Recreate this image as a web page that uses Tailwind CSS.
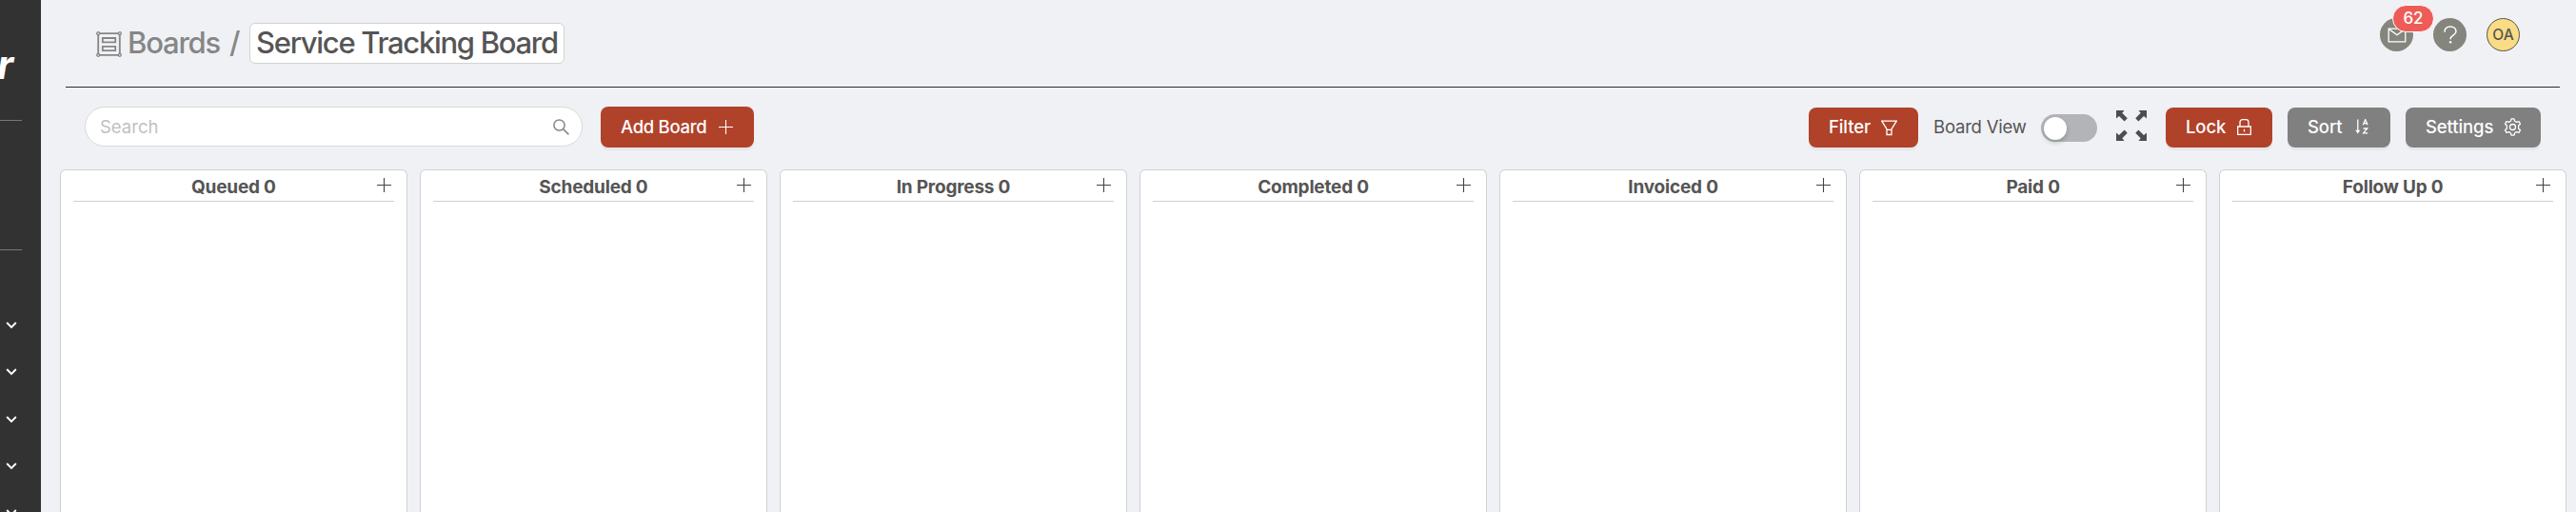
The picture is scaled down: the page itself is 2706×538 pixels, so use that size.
<!DOCTYPE html>
<html lang="en">
<head>
  <meta charset="UTF-8" />
  <meta name="viewport" content="width=device-width, initial-scale=1.0" />
  <title>Service Tracking Board</title>
  <script src="https://cdn.jsdelivr.net/npm/@tailwindcss/browser@4"></script>
</head>
<body class="flex h-screen overflow-hidden bg-[#f0f1f5] font-['Inter',sans-serif] text-xl text-[#555]">

  <!-- Sidebar -->
  <aside class="flex w-[43px] shrink-0 flex-col overflow-hidden bg-[#323232]">
    <div class="flex h-[126px] w-[14px] shrink-0 justify-end pt-[40px] text-[42px] leading-[56px] font-bold text-white italic">r</div>
    <div class="h-[137px] w-[23px] shrink-0 border-y border-[#777]"></div>
    <nav id="sideNav" class="flex flex-col pt-[74px] pl-[6px]"></nav>
  </aside>

  <main class="flex flex-1 flex-col pr-[10px] pl-5">
    <!-- Top bar -->
    <header class="mr-[7px] ml-[6px] flex h-[92px] items-start border-b border-[#2b2c33] pl-8">
      <svg class="mt-[33px] h-[27px] w-[27px]" viewBox="0 0 27 27" fill="none" stroke="#868686" stroke-width="1.8">
        <path d="M3.5 2.2h20M3.5 24.8h20M2.2 3.5v20M24.8 3.5v20" />
        <path d="M6.8 7h13.4v4.4H6.8zM6.8 15.8h13.4v4.4H6.8z" />
        <g fill="#ddd" stroke-width="1.3">
          <circle cx="2.2" cy="2.2" r="1.5" /><circle cx="24.8" cy="2.2" r="1.5" />
          <circle cx="2.2" cy="24.8" r="1.5" /><circle cx="24.8" cy="24.8" r="1.5" />
        </g>
      </svg>
      <span class="ml-[6px] w-[107px] shrink-0 pt-[23px] text-[31px] leading-[43px] font-[450] tracking-[-1.2px] whitespace-nowrap text-[#868686]">Boards</span>
      <span class="w-[21px] shrink-0 pt-[23px] text-[31px] leading-[43px] font-[450] text-[#868686]">/</span>
      <div class="mt-6 h-[43px] w-[331px] shrink-0 rounded-md border border-[#d2d2d2] bg-white pl-[6px] text-[31px] leading-[39px] font-[450] tracking-[-1.3px] whitespace-nowrap">Service Tracking Board</div>

      <div class="mt-[19px] mr-[42px] ml-auto flex gap-[21px]">
        <div class="relative flex h-[35px] w-[35px] items-center justify-center rounded-full bg-[#84857d]">
          <svg class="h-[16px] w-[20px]" viewBox="0 0 20 16" fill="none" stroke="#fff" stroke-width="1.3">
            <path d="M1.2 1.2h17.6v13.6H1.2zM1.2 1.4l8.8 6.4 8.8-6.4" />
          </svg>
          <span class="absolute -top-[14px] left-[13px] flex h-[29px] w-[44px] items-center justify-center rounded-full border border-white bg-[#ed5c57] text-[17px] font-medium text-white">62</span>
        </div>
        <div class="flex h-[35px] w-[35px] items-center justify-center rounded-full bg-[#84857d]">
          <svg class="h-[19px] w-[14px]" viewBox="0 0 14 19" fill="none" stroke="#fff" stroke-width="1.5">
            <path d="M1 6.8C1 3 3.4 1 7 1s6 2.1 6 5.1c0 4-5.8 4-5.8 7.6v.6" />
            <circle cx="7.1" cy="17.3" r=".9" fill="#fff" stroke-width="1" />
          </svg>
        </div>
        <div class="flex h-[35px] w-[35px] items-center justify-center rounded-full border border-[#55554d] bg-[#f9dc84] text-[15.5px] font-medium">OA</div>
      </div>
    </header>

    <!-- Toolbar -->
    <div class="flex h-[86px] items-start pt-5 pr-[27px] pl-[26px]">
      <div class="flex h-[42px] w-[523px] items-center justify-between rounded-full border border-[#d9d9d9] bg-white pr-[13px] pl-[15px] text-[#bfbfbf]">
        <span class="pt-px text-[18.5px]">Search</span>
        <svg class="h-[17px] w-[17px]" viewBox="0 0 17 17" fill="none" stroke="#868686" stroke-width="1.5">
          <circle cx="6.5" cy="6.5" r="5.6" /><path d="M10.6 10.6l5.8 5.8" />
        </svg>
      </div>
      <button class="ml-[19px] flex h-[43px] w-[161px] items-center rounded-lg bg-[#b0422a] pl-[21px] text-[18.5px] font-medium text-white shadow-[0_3px_0_rgba(0,0,0,0.04)]">
        <span class="w-[103px] text-left tracking-[-0.3px] whitespace-nowrap">Add Board</span>
        <svg class="h-[15px] w-[15px]" viewBox="0 0 15 15" stroke="#fff" stroke-width="1.1"><path d="M7.5 0v15M0 7.5h15" /></svg>
      </button>

      <div class="mt-px ml-auto flex h-[42px] items-center text-[18.5px] tracking-[-0.1px]">
        <button class="flex h-[42px] w-[115px] items-center rounded-lg bg-[#b0422a] pl-[21px] font-medium text-white shadow-[0_3px_0_rgba(0,0,0,0.04)]">
          <span class="w-[55px] text-left">Filter</span>
          <svg class="h-[17px] w-[17px]" viewBox="0 0 17 17" fill="none" stroke="#fff" stroke-width="1.3">
            <path d="M.8 1.2h15.4L11 9.7v5.8H6V9.7zM6 10.4h5" />
          </svg>
        </button>
        <span class="ml-[16px] w-[113px] tracking-[-0.2px] whitespace-nowrap">Board View</span>
        <div class="mt-[1px] h-[29px] w-[59px] rounded-full bg-[#b3b4b7] p-[3px]">
          <div class="-mt-[0.5px] h-[24px] w-[24px] rounded-full bg-white shadow-[0_3px_5px_rgba(0,35,11,0.2)]"></div>
        </div>
        <svg class="-mt-[4px] ml-5 h-8 w-8" viewBox="0 0 32 32" fill="#4c4d50" stroke="none">
          <path id="corner" d="M0 0h8.5L6.3 2.8l5.5 5.5-3.2 3.2-5.6-5.4L0 8.5z" />
          <use href="#corner" transform="translate(32 0) scale(-1 1)" />
          <use href="#corner" transform="translate(0 32) scale(1 -1)" />
          <use href="#corner" transform="translate(32 32) scale(-1 -1)" />
        </svg>
        <button class="ml-5 flex h-[42px] w-[112px] items-center rounded-lg bg-[#b0422a] pl-[21px] font-medium text-white shadow-[0_3px_0_rgba(0,0,0,0.04)]">
          <span class="w-[54px] text-left">Lock</span>
          <svg class="mb-px h-[17px] w-[15px]" viewBox="0 0 15 17" fill="none" stroke="#fff" stroke-width="1.3">
            <path d="M.7 8h13.6v8.3H.7zM3 8V3.5C3 1.7 4 .7 5.7.7h3.6C11 .7 12 1.7 12 3.5V8M7.5 10.8v2.6" />
          </svg>
        </button>
        <button class="ml-4 flex h-[42px] w-[108px] items-center rounded-lg bg-[#808080] pl-[21px] font-medium text-white shadow-[0_3px_0_rgba(0,0,0,0.04)]">
          <span class="w-[50px] text-left">Sort</span>
          <svg class="mb-[2px] h-[16px] w-[14px]" viewBox="0 0 14 16" fill="none" stroke="#fff" stroke-width="1.3">
            <path d="M2.8 .5v12" /><path d="M.2 11.8h5.2L2.8 15.5z" fill="#fff" stroke="none" />
            <path d="M8.3 6.2l2.4-5.5 2.4 5.5M9.1 4.6h3.2M8.6 10h4.2l-4.2 4.9h4.6" />
          </svg>
        </button>
        <button class="ml-4 flex h-[42px] w-[142px] items-center rounded-lg bg-[#808080] pl-[21px] font-medium text-white shadow-[0_3px_0_rgba(0,0,0,0.04)]">
          <span class="w-[82px] text-left">Settings</span>
          <svg class="mb-px h-[19px] w-[19px]" viewBox="0 0 19 19" fill="none" stroke="#fff" stroke-width="1.3" stroke-linejoin="round">
            <path d="M8 .8h3l.6 2.5 1.9 1.1 2.5-.8 1.5 2.6-1.9 1.8v3l1.9 1.8-1.5 2.6-2.5-.8-1.9 1.1-.6 2.5H8l-.6-2.5-1.9-1.1-2.5.8-1.5-2.6L3.4 11V8L1.5 6.2 3 3.6l2.5.8 1.9-1.1z" />
            <circle cx="9.5" cy="9.5" r="3" />
          </svg>
        </button>
      </div>
    </div>

    <!-- Board columns -->
    <div id="board" class="grid flex-1 grid-cols-7 gap-[13.4px]"></div>
  </main>

  <script>
    const columns = ["Queued", "Scheduled", "In Progress", "Completed", "Invoiced", "Paid", "Follow Up"];

    document.getElementById("board").innerHTML = columns
      .map((name) => `
        <section class="rounded-t-md border border-b-0 border-[#d0d1d4] bg-white px-[13px]">
          <div class="relative h-[33px] border-b border-[#d0d0d0] text-center text-[19px] leading-[35px] font-bold tracking-[-0.2px]">
            ${name} 0
            <svg class="absolute top-[8px] right-[3px] h-[15px] w-[15px]" viewBox="0 0 15 15" stroke="#444" stroke-width="1.1"><path d="M7.5 0v15M0 7.5h15" /></svg>
          </div>
        </section>`)
      .join("");

    document.getElementById("sideNav").innerHTML = Array(5)
      .fill(`<div class="h-[49.3px] shrink-0">
          <svg class="h-[10px] w-[12px]" viewBox="0 0 12 10" fill="none" stroke="#fff" stroke-width="1.9"><path d="M1.2 2l4.8 5 4.8-5" /></svg>
        </div>`)
      .join("");
  </script>
</body>
</html>
